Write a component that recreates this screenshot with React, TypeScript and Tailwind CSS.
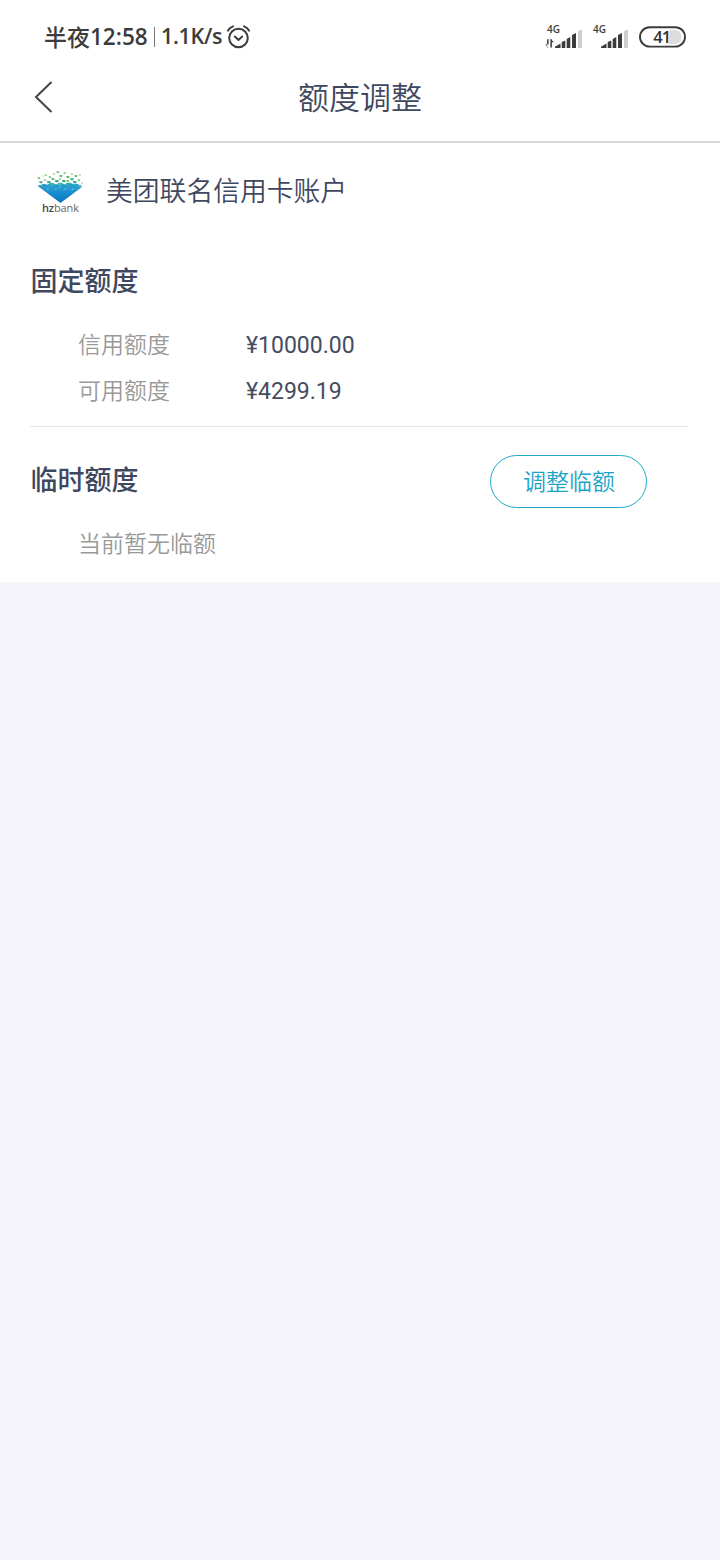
import React from "react";

const CJK = "font-['Noto_Sans_CJK_SC',sans-serif]";

function AlarmIcon() {
  return (
    <svg width="26" height="26" viewBox="0 0 26 26" fill="none" stroke="#3c3c3c" strokeWidth="2" strokeLinecap="round" strokeLinejoin="round">
      <circle cx="12.500" cy="14" r="9.300" />
      <path d="M2 6.600Q3.800 3.600 7 2.400M23 6.600Q21.200 3.600 18 2.400M8.800 12.600L12.500 15.900L16.200 12.600" />
    </svg>
  );
}

function Signal({ data }: { data?: boolean }) {
  return (
    <svg width="38" height="34" viewBox="0 -4 38 34" fill="#3c3c3c">
      <text x="2" y="8.500" fontSize="10" fontWeight="600" className="font-['Open_Sans',sans-serif]">4G</text>
      {data && (
        <path d="M2.100 15.300h1.500v8.200H2.100zM.2 20.500L3.600 24V20.500zM5.400 15.300h1.500v8.200H5.400zM5.400 14.800L9 18.300H5.400z" />
      )}
      <path d="M10 24V22.800L15.500 19.500V24zM16.700 24V18L20.300 16.500V24zM21.700 24V15L25.300 13V24zM27 24V11L31 9V24z" />
      <path d="M33 24V7.300L37 5.200V24z" fill="#cecece" />
    </svg>
  );
}

function Battery() {
  return (
    <svg width="47" height="22" viewBox="0 0 47 22">
      <path d="M30 4H36Q42.500 4 42.500 11Q42.500 18 36 18H30z" fill="#dddddd" />
      <rect x="1" y="1.200" width="45" height="19.400" rx="9.700" fill="none" stroke="#3c3c3c" strokeWidth="1.900" />
      <text x="22.800" y="17" textAnchor="middle" fontSize="16.500" fontWeight="600" fill="#303030" className="font-['Open_Sans',sans-serif]" letterSpacing="-0.800">41</text>
    </svg>
  );
}

const DOTS: [number, number, number, string][] = [
  [3, 8, 1.5, "#77bd82"], [7, 6, 1, "#a8d696"], [10, 5, 1.4, "#82c77d"], [14, 7, 1.3, "#55b17b"],
  [18, 4, 1.2, "#8acb7b"], [22, 2, 1.5, "#64bc72"], [25, 6, 1.6, "#56b070"], [29, 3, 1.4, "#7ec96e"],
  [32, 7, 1.7, "#51af6c"], [36, 4, 1.3, "#98d583"], [40, 6, 1.6, "#60b674"], [44, 5, 1.2, "#a5d58e"],
  [5, 12, 1.8, "#50aa9b"], [9, 10, 1.4, "#8acb80"], [13, 12, 2, "#41a996"], [17, 9, 1.8, "#6abc71"],
  [21, 11, 2, "#36a691"], [24, 9, 1.3, "#8dd36b"], [28, 11, 2, "#43b17f"], [32, 11, 1.7, "#77c965"],
  [36, 9, 1.8, "#42ac8e"], [39, 12, 2, "#35a9a6"], [43, 10, 1.5, "#7ec779"], [46, 13, 1, "#9cce98"],
  [4, 16, 1.8, "#369fc2"], [8, 15, 2.1, "#2b9fc1"], [12, 16, 2.3, "#239dca"], [16, 14, 2.1, "#42afa5"],
  [20, 16, 2.4, "#1c9bc8"], [24, 14, 2.2, "#54b79b"], [28, 16, 2.3, "#1b9cca"], [32, 14, 2.1, "#39aaa9"],
  [36, 16, 2.4, "#219ec9"], [40, 15, 2.2, "#31a5c0"], [44, 16, 1.8, "#50acc4"],
];

function BankLogo() {
  return (
    <svg width="48" height="46" viewBox="0 0 48 46">
      <defs>
        <linearGradient id="gem" x1="0" y1="0" x2="0" y2="1">
          <stop offset="0" stopColor="#3aa9d8" />
          <stop offset="0.550" stopColor="#168bcd" />
          <stop offset="1" stopColor="#0b72bb" />
        </linearGradient>
      </defs>
      <path d="M3 17L7 14L11 15L15 12.500L20 14.500L24.500 12.500L29 14.500L34 12.500L39 15L42 14L46 17L24.500 33z" fill="url(#gem)" />
      {DOTS.map(([x, y, r, color]) => (
        <path key={`${x}-${y}`} d={`M${x - r} ${y - r * 0.6}L${x + r} ${y - r * 0.4}L${x + r * 0.4} ${y + r * 0.8}L${x - r * 0.8} ${y + r * 0.5}z`} fill={color} />
      ))}
      <path d="M10 19l2-1 1 2zM18 20l2-2 1 1zM27 19l3-1 0 2zM35 20l2-2 1 2zM22 18l2-1 1 1z" fill="#64bedb" />
      <text x="6" y="41.500" fontSize="11" fill="#666666" textLength="37" className="font-['Open_Sans',sans-serif]">
        <tspan fontWeight="600" fill="#444444">hz</tspan>bank
      </text>
    </svg>
  );
}

function StatusBar() {
  return (
    <div className="flex h-[70px] items-center justify-between pr-[34px] pb-[4px] pl-[44px] pt-[8px] text-[#3c3c3c]">
      <div className="flex h-[26px] items-center">
        <span className={`${CJK} mb-[2px] text-[23px] leading-[26px] font-medium`}>半夜</span>
        <span className="w-[58px] font-['Open_Sans',sans-serif] text-[22.500px] leading-[26px] font-semibold whitespace-nowrap">12:58</span>
        <span className="mr-[6px] ml-[6px] h-[20px] w-px bg-[#777777]" />
        <span className="mb-[2px] w-[61px] font-['Open_Sans',sans-serif] text-[21.500px] leading-[26px] font-semibold tracking-[-0.300px] whitespace-nowrap">1.1K/s</span>
        <span className="ml-[4px]"><AlarmIcon /></span>
      </div>
      <div className="flex items-center">
        <Signal data />
        <span className="ml-[8px]"><Signal /></span>
        <span className="ml-[10px]"><Battery /></span>
      </div>
    </div>
  );
}

function LimitRow({ label, value }: { label: string; value: string }) {
  return (
    <div className="flex h-[46px] items-center pl-[48px]">
      <span className="w-[168px] pb-[3px] text-[23px] font-[350] text-[#999999]">{label}</span>
      <span className="pt-[2px] font-['Roboto',sans-serif] text-[23px] text-[#464c60]">{value}</span>
    </div>
  );
}

export default function App() {
  return (
    <main className={`${CJK} flex min-h-[1560px] w-[720px] flex-col bg-[#f4f4fa] text-[#3f485f]`}>
      <div className="bg-white">
        <StatusBar />
        <header className="grid h-[73px] grid-cols-[100px_1fr_100px] items-center border-b-2 border-[#d8d8d8] pb-[17px]">
          <button aria-label="返回" className="pl-[34px]">
            <svg width="20" height="34" viewBox="0 0 20 34" fill="none" stroke="#454545" strokeWidth="2">
              <path d="M17.500 2L2 17L17.500 32" />
            </svg>
          </button>
          <h1 className="pb-[2px] text-center text-[31px] leading-[40px] font-[350]">额度调整</h1>
        </header>
      </div>
      <section className="h-[439px] bg-white pr-[32px] pl-[30px]">
        <div className="flex h-[95px] items-center">
          <span className="ml-[6px] pt-[5px]"><BankLogo /></span>
          <h2 className="ml-[22px] pb-px text-[26.800px] leading-[40px] font-[350]">美团联名信用卡账户</h2>
        </div>
        <h3 className="h-[84px] pt-[22px] pl-[0.500px] text-[27px] leading-[40px] font-medium">固定额度</h3>
        <div className="h-[105px] border-b border-[#e5e5e5]">
          <LimitRow label="信用额度" value="¥10000.00" />
          <LimitRow label="可用额度" value="¥4299.19" />
        </div>
        <div className="flex h-[108px] items-center justify-between pr-[41px]">
          <h3 className="pb-[4px] pl-[0.500px] text-[27px] leading-[40px] font-medium">临时额度</h3>
          <button className="h-[53px] w-[157px] rounded-full border border-[#1ba9cc] pb-px pl-px text-[23px] font-[350] text-[#1ba4c8]">调整临额</button>
        </div>
        <p className="pl-[48px] text-[23px] leading-[14px] font-[350] text-[#999999]">当前暂无临额</p>
      </section>
    </main>
  );
}
